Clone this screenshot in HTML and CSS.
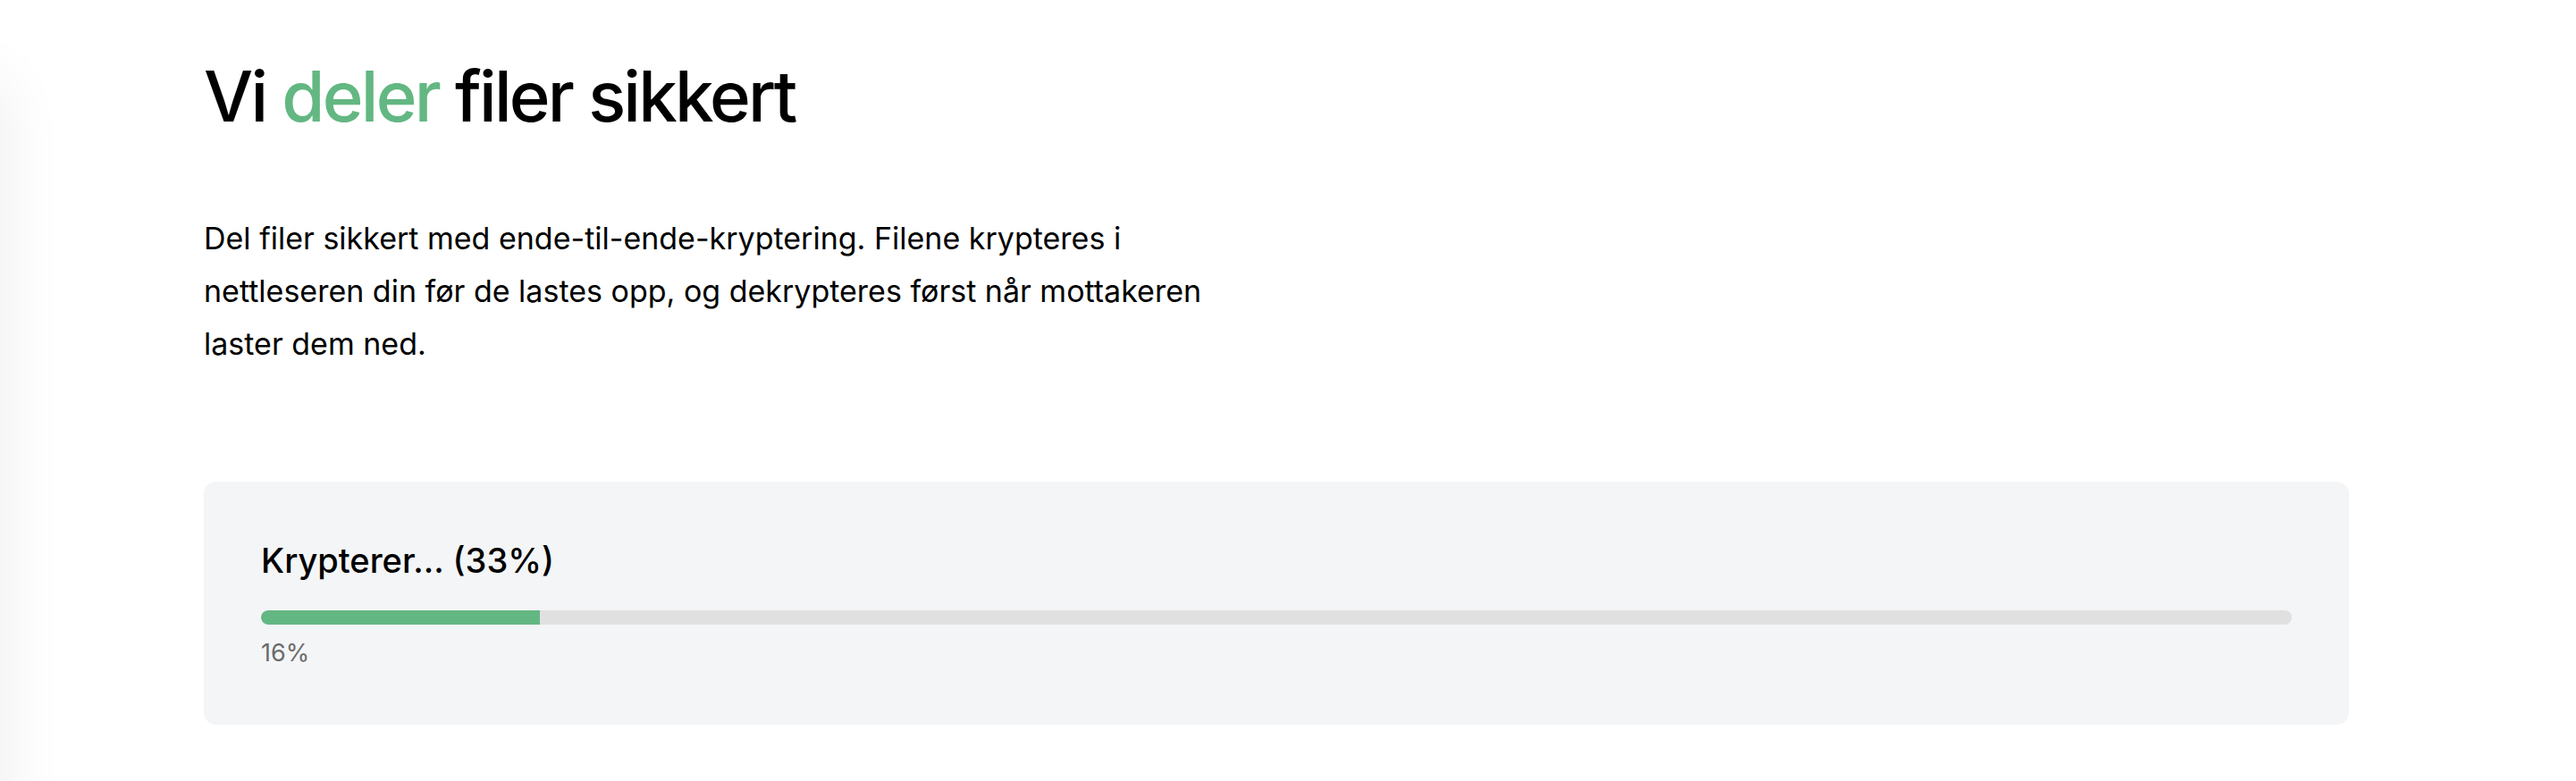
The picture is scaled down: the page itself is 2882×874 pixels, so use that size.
FILE: index.html
```html
<!DOCTYPE html>
<html lang="no">
<head>
<meta charset="utf-8">
<title>Vi deler filer sikkert</title>
<link rel="stylesheet" href="styles.css">
</head>
<body>
<div class="edge-shadow"></div>
<main class="page">
  <h1 class="title">Vi <span class="accent">deler</span> filer sikkert</h1>
  <p class="intro">Del filer sikkert med ende-til-ende-kryptering. Filene krypteres i nettleseren din før de lastes opp, og dekrypteres først når mottakeren laster dem ned.</p>
  <section class="progress-card">
    <h2 class="progress-title">Krypterer... (33%)</h2>
    <div class="track"><div class="fill" style="width: 13.75%"></div></div>
    <div class="progress-label">16%</div>
  </section>
</main>
</body>
</html>
```
FILE: styles.css
```css
html, body {
  margin: 0;
  padding: 0;
  background: #ffffff;
  height: 100%;
  overflow: hidden;
}
body {
  font-family: Inter, "Noto Sans", "Liberation Sans", sans-serif;
  color: #000;
  position: relative;
}
.edge-shadow {
  position: absolute;
  left: -60px;
  top: 90px;
  width: 60px;
  height: 1200px;
  border-radius: 40px;
  box-shadow: 0 0 70px 6px rgba(0, 0, 0, 0.07);
}
.page {
  padding: 69px 254px 0 228px;
  display: flex;
  flex-direction: column;
}
.title {
  margin: 0;
  font-size: 78px;
  line-height: 1;
  font-weight: 500;
  letter-spacing: -2.8px;
}
.accent {
  color: #63b782;
}
.intro {
  margin: 90px 0 0;
  max-width: 1152px;
  font-size: 34px;
  line-height: 59px;
}
.progress-card {
  margin-top: 125px;
  background: #f4f5f7;
  border-radius: 14px;
  padding: 64px;
  display: flex;
  flex-direction: column;
}
.progress-title {
  margin: 0;
  font-size: 38px;
  font-weight: 500;
  line-height: 48px;
}
.track {
  margin-top: 32px;
  height: 16px;
  border-radius: 8px;
  background: #e0e0e0;
  overflow: hidden;
}
.fill {
  height: 100%;
  background: #63b782;
  border-radius: 8px 0 0 8px;
}
.progress-label {
  margin-top: 16px;
  font-size: 27px;
  line-height: 32px;
  color: #6b6b6b;
}
```
